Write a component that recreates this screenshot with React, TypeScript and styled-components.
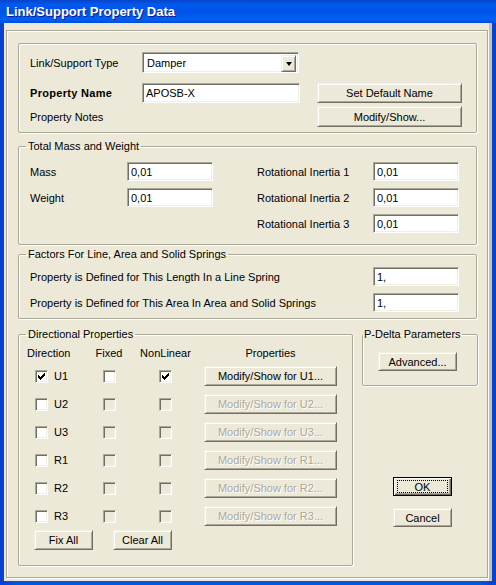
import styled, { createGlobalStyle, css } from 'styled-components';

const GlobalStyle = createGlobalStyle`
  html, body {
    margin: 0;
    padding: 0;
    background: #fff;
  }
`;

const face = '#ECE9D8';
const shade = '#ACA899';
const dark = '#716F64';

export default function App() {
  return (
    <>
      <GlobalStyle />
      <Window>
        <TitleBar>Link/Support Property Data</TitleBar>
        <Body>
          <Frame>
            <PlainGroup>
              <Row>
                <Label $w={112}>Link/Support Type</Label>
                <Select>
                  <SelectText>Damper</SelectText>
                  <DropButton>
                    <Arrow />
                  </DropButton>
                </Select>
              </Row>
              <Row $mt={10}>
                <Label $w={112} $bold>
                  Property Name
                </Label>
                <TextBox $w={158} $h={20}>APOSB-X</TextBox>
                <Button $w={145} $h={20} $ml={17}>
                  Set Default Name
                </Button>
              </Row>
              <Row $mt={3}>
                <Label $w={287}>Property Notes</Label>
                <Button $w={145} $h={21}>
                  Modify/Show...
                </Button>
              </Row>
            </PlainGroup>

            <Group $mt={7}>
              <Legend>Total Mass and Weight</Legend>
              <MassGrid>
                <Label>Mass</Label>
                <TextBox>0,01</TextBox>
                <span />
                <Label>Rotational Inertia 1</Label>
                <TextBox>0,01</TextBox>
                <Label>Weight</Label>
                <TextBox>0,01</TextBox>
                <span />
                <Label>Rotational Inertia 2</Label>
                <TextBox>0,01</TextBox>
                <span />
                <span />
                <span />
                <Label>Rotational Inertia 3</Label>
                <TextBox>0,01</TextBox>
              </MassGrid>
            </Group>

            <Group $mt={3}>
              <Legend>Factors For Line, Area and Solid Springs</Legend>
              <SpringGrid>
                <Label>Property is Defined for This Length In a Line Spring</Label>
                <TextBox>1,</TextBox>
                <Label>Property is Defined for This Area In Area and Solid Springs</Label>
                <TextBox>1,</TextBox>
              </SpringGrid>
            </Group>

            <BottomArea>
              <Group $w={335}>
                <Legend>Directional Properties</Legend>
                <DirGrid>
                  <HeadCell>Direction</HeadCell>
                  <HeadCell $center>Fixed</HeadCell>
                  <HeadCell $center>NonLinear</HeadCell>
                  <HeadCell $center>Properties</HeadCell>
                  {directions.map(d => (
                    <DirRow key={d.name} {...d} />
                  ))}
                </DirGrid>
                <FixRow>
                  <Button $w={59} $h={20}>
                    Fix All
                  </Button>
                  <Button $w={59} $h={20}>
                    Clear All
                  </Button>
                </FixRow>
              </Group>

              <SideColumn>
                <Group $w={116}>
                  <Legend $tight>P-Delta Parameters</Legend>
                  <PDeltaBody>
                    <Button $w={79} $h={19}>
                      Advanced...
                    </Button>
                  </PDeltaBody>
                </Group>
                <DialogButtons>
                  <Button $w={59} $h={19} $default>
                    <Focus>OK</Focus>
                  </Button>
                  <Button $w={59} $h={19}>
                    Cancel
                  </Button>
                </DialogButtons>
              </SideColumn>
            </BottomArea>
          </Frame>
        </Body>
      </Window>
    </>
  );
}

interface IDirection {
  name: string;
  checked: boolean;
  nonLinear: boolean;
  enabled: boolean;
}

const directions: IDirection[] = [
  { name: 'U1', checked: true, nonLinear: true, enabled: true },
  { name: 'U2', checked: false, nonLinear: false, enabled: false },
  { name: 'U3', checked: false, nonLinear: false, enabled: false },
  { name: 'R1', checked: false, nonLinear: false, enabled: false },
  { name: 'R2', checked: false, nonLinear: false, enabled: false },
  { name: 'R3', checked: false, nonLinear: false, enabled: false },
];

function DirRow({ name, checked, nonLinear, enabled }: IDirection) {
  return (
    <>
      <DirCell>
        <CheckBox checked={checked} />
        <span>{name}</span>
      </DirCell>
      <CenterCell>
        <CheckBox disabled={!enabled} />
      </CenterCell>
      <CenterCell>
        <CheckBox checked={nonLinear} disabled={!enabled} />
      </CenterCell>
      <CenterCell>
        <Button $w={133} $h={20} disabled={!enabled}>
          Modify/Show for {name}...
        </Button>
      </CenterCell>
    </>
  );
}

function CheckBox({ checked, disabled }: { checked?: boolean; disabled?: boolean }) {
  return (
    <Box $disabled={disabled}>
      {checked && (
        <svg width='7' height='7' viewBox='0 0 7 7' shapeRendering='crispEdges'>
          <path
            fill='#000'
            d='M6 0h1v1h-1z M5 1h2v1h-2z M0 2h1v1h-1z M4 2h3v1h-3z M0 3h2v1h-2z M3 3h3v1h-3z M0 4h5v1h-5z M1 5h3v1h-3z M2 6h1v1h-1z'
          />
        </svg>
      )}
    </Box>
  );
}

const Window = styled.div`
  width: 496px;
  height: 585px;
  display: flex;
  flex-direction: column;
  background: linear-gradient(to right, #0A3FD0, #0054E3 3%, #0054E3 97%, #0840C8);
  font-family: 'Liberation Sans', Arial, sans-serif;
  font-size: 11px;
  color: #000;
  overflow: hidden;
`;

const TitleBar = styled.div`
  height: 23px;
  flex: none;
  display: flex;
  align-items: center;
  padding-left: 6px;
  color: #fff;
  font-weight: bold;
  font-size: 13px;
  text-shadow: 1px 1px 0 #0A1E8C;
  background: linear-gradient(
    to bottom,
    #0843C8 0%,
    #0058EE 18%,
    #0055E8 55%,
    #0060F6 85%,
    #0049DA 100%
  );
`;

const Body = styled.div`
  flex: 1;
  display: flex;
  margin: 0 4px 4px 4px;
  background: ${face};
  border-right: 3px solid #C6C2B6;
`;

const etched = css`
  border: 1px solid ${shade};
  box-shadow: inset 1px 1px 0 #fff, 1px 1px 0 #fff;
`;

const Frame = styled.div`
  width: 482px;
  margin: 7px 0 3px 2px;
  padding: 12px 9px 0 11px;
  box-sizing: border-box;
  display: flex;
  flex-direction: column;
  ${etched};
`;

const PlainGroup = styled.div`
  width: 459px;
  box-sizing: border-box;
  padding: 8px 0 5px 11px;
  ${etched};
  border-radius: 2px;
`;

const Row = styled.div<{ $mt?: number }>`
  display: flex;
  align-items: center;
  margin-top: ${p => p.$mt ?? 0}px;
`;

const Label = styled.span<{ $w?: number; $bold?: boolean }>`
  ${p => p.$w && `width: ${p.$w}px; flex: none;`}
  font-weight: ${p => (p.$bold ? 'bold' : 'normal')};
  letter-spacing: ${p => (p.$bold ? '0.3px' : 'normal')};
  white-space: nowrap;
`;

const sunken = css`
  box-sizing: border-box;
  background: #fff;
  border: 1px solid;
  border-color: ${shade} #fff #fff ${shade};
  box-shadow: inset 1px 1px 0 ${dark}, inset -1px -1px 0 #F1EFE2;
`;

const TextBox = styled.div<{ $w?: number; $h?: number }>`
  ${sunken};
  width: ${p => p.$w ?? 86}px;
  height: ${p => p.$h ?? 19}px;
  padding: 2px 3px 0 3px;
  line-height: 14px;
  white-space: nowrap;
`;

const Select = styled.div`
  ${sunken};
  width: 157px;
  height: 21px;
  display: flex;
  padding: 2px;
`;

const SelectText = styled.span`
  flex: 1;
  padding-left: 2px;
  line-height: 17px;
`;

const raised = css`
  background: ${face};
  border: 1px solid;
  border-color: #F1EFE2 ${dark} ${dark} #F1EFE2;
  box-shadow: inset 1px 1px 0 #fff, inset -1px -1px 0 ${shade};
`;

const DropButton = styled.span`
  ${raised};
  box-sizing: border-box;
  width: 15px;
  height: 17px;
  display: flex;
  align-items: center;
  justify-content: center;
`;

const Arrow = styled.span`
  width: 0;
  height: 0;
  border-left: 3.5px solid transparent;
  border-right: 3.5px solid transparent;
  border-top: 4px solid #000;
`;

const Button = styled.button<{ $w: number; $h: number; $ml?: number; $default?: boolean }>`
  ${raised};
  box-sizing: border-box;
  width: ${p => p.$w}px;
  height: ${p => p.$h}px;
  margin: 0 0 0 ${p => p.$ml ?? 0}px;
  padding: 0;
  font-family: inherit;
  font-size: 11px;
  color: #000;
  white-space: nowrap;
  display: flex;
  align-items: center;
  justify-content: center;
  ${p =>
    p.$default &&
    css`
      border: 1px solid #000;
      box-shadow: inset 1px 1px 0 #fff, inset -1px -1px 0 ${dark}, inset -2px -2px 0 ${shade};
    `}
  &:disabled {
    color: ${shade};
    text-shadow: 1px 1px 0 #fff;
  }
`;

const Focus = styled.span`
  width: 49px;
  height: 11px;
  border: 1px dotted #000;
  display: flex;
  align-items: center;
  justify-content: center;
`;

const Group = styled.fieldset<{ $mt?: number; $w?: number }>`
  margin: ${p => p.$mt ?? 0}px 0 0 0;
  padding: 0;
  min-width: 0;
  width: ${p => p.$w ?? 459}px;
  box-sizing: border-box;
  ${etched};
  border-radius: 2px;
`;

const Legend = styled.legend<{ $tight?: boolean }>`
  margin-left: ${p => (p.$tight ? 0 : 7)}px;
  padding: 0 ${p => (p.$tight ? 1 : 2)}px;
  line-height: 13px;
  font-size: 11px;
`;

const MassGrid = styled.div`
  display: grid;
  grid-template-columns: 97px 86px 44px 116px 86px;
  grid-auto-rows: 19px;
  row-gap: 7px;
  align-items: center;
  padding: 9px 0 11px 11px;
`;

const SpringGrid = styled.div`
  display: grid;
  grid-template-columns: 343px 86px;
  grid-auto-rows: 19px;
  row-gap: 7px;
  align-items: center;
  padding: 6px 0 6px 11px;
`;

const BottomArea = styled.div`
  display: flex;
  align-items: flex-start;
  margin-top: 9px;
`;

const DirGrid = styled.div`
  display: grid;
  grid-template-columns: 58px 48px 65px 145px;
  grid-template-rows: 10px;
  grid-auto-rows: 20px;
  row-gap: 8px;
  align-items: center;
  padding: 7px 0 0 8px;
`;

const HeadCell = styled.span<{ $center?: boolean }>`
  text-align: ${p => (p.$center ? 'center' : 'left')};
  white-space: nowrap;
  line-height: 10px;
`;

const DirCell = styled.div`
  display: flex;
  align-items: center;
  gap: 6px;
  padding-left: 8px;
`;

const CenterCell = styled.div`
  display: flex;
  justify-content: center;
  align-items: center;
`;

const Box = styled.span<{ $disabled?: boolean }>`
  box-sizing: border-box;
  width: 13px;
  height: 13px;
  flex: none;
  display: flex;
  align-items: center;
  justify-content: center;
  background: ${p => (p.$disabled ? face : '#fff')};
  border: 1px solid;
  border-color: ${shade} #fff #fff ${shade};
  box-shadow: inset 1px 1px 0 ${dark}, inset -1px -1px 0 #F1EFE2;
`;

const FixRow = styled.div`
  display: flex;
  gap: 20px;
  padding: 4px 0 15px 15px;
`;

const SideColumn = styled.div`
  width: 116px;
  margin-left: 9px;
  display: flex;
  flex-direction: column;
`;

const PDeltaBody = styled.div`
  padding: 11px 0 14px 15px;
`;

const DialogButtons = styled.div`
  display: flex;
  flex-direction: column;
  gap: 12px;
  margin-top: 91px;
  padding-left: 31px;
`;
